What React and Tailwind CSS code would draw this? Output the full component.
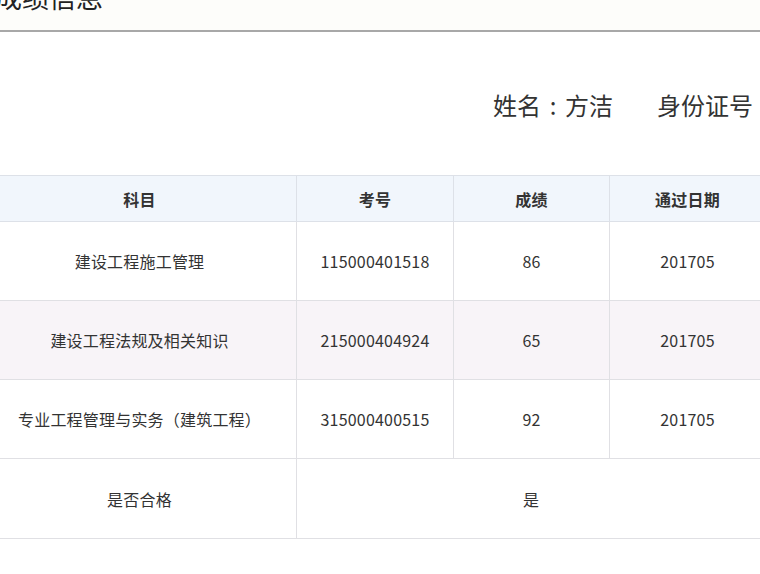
import React from "react";

const rows = [
  { subject: "建设工程施工管理", no: "115000401518", score: "86", date: "201705", bg: "bg-white" },
  { subject: "建设工程法规及相关知识", no: "215000404924", score: "65", date: "201705", bg: "bg-[#f8f4f8]" },
  { subject: "专业工程管理与实务（建筑工程）", no: "315000400515", score: "92", date: "201705", bg: "bg-white" },
];

export default function App() {
  return (
    <div
      className="w-[760px] h-[574px] overflow-hidden bg-white text-[#333]"
      style={{ fontFamily: '"Noto Sans CJK SC", "Noto Sans", sans-serif' }}
    >
      <div className="h-[30px] bg-[#fdfdfa] relative overflow-hidden">
        <div className="absolute left-[-5px] top-[-17px] text-[27px] leading-[27px] text-[#222] whitespace-nowrap">
          成绩信息
        </div>
      </div>
      <div className="h-[2px] bg-[#a8a8a8]" />
      <div className="h-[143px] flex items-center pl-[493px] pt-[2px] whitespace-nowrap text-[24px] text-[#333]">
        <span className="shrink-0">姓名</span>
        <span className="shrink-0 w-[24px] text-center">:</span>
        <span className="shrink-0">方洁</span>
        <span className="shrink-0 ml-[44px]">身份证号</span>
        <span className="shrink-0 w-[24px] text-center">:</span>
      </div>
      <table className="ml-[-18px] w-[783px] border-collapse table-fixed text-[16px] text-[#333] tracking-[0.2px]">
        <colgroup>
          <col className="w-[314px]" />
          <col className="w-[157px]" />
          <col className="w-[156px]" />
          <col className="w-[156px]" />
        </colgroup>
        <thead>
          <tr className="h-[46px] bg-[#f1f6fc]">
            {["科目", "考号", "成绩", "通过日期"].map((h) => (
              <th key={h} className="border border-[#dde1e8] font-bold text-center">
                {h}
              </th>
            ))}
          </tr>
        </thead>
        <tbody>
          {rows.map((r) => (
            <tr key={r.no} className={`h-[79px] ${r.bg}`}>
              <td className="border border-[#e0e0e4] text-center">{r.subject}</td>
              <td className="border border-[#e0e0e4] text-center">{r.no}</td>
              <td className="border border-[#e0e0e4] text-center">{r.score}</td>
              <td className="border border-[#e0e0e4] text-center">{r.date}</td>
            </tr>
          ))}
          <tr className="h-[80px] bg-white">
            <td className="border border-[#e0e0e4] text-center">是否合格</td>
            <td colSpan={3} className="border border-[#e0e0e4] text-center">是</td>
          </tr>
        </tbody>
      </table>
    </div>
  );
}
